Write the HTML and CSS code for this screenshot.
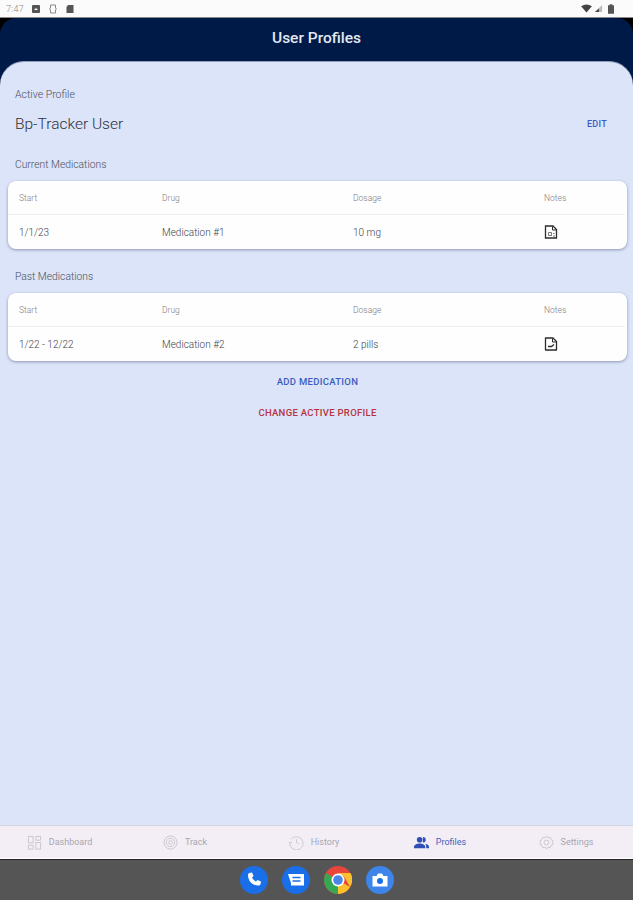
FILE: index.html
```html
<!DOCTYPE html>
<html lang="en">
<head>
  <meta charset="UTF-8" />
  <meta name="viewport" content="width=device-width, initial-scale=1.0" />
  <title>User Profiles</title>
  <link rel="stylesheet" href="styles.css">
</head>
<body>
  <div class="status-bar">
    <div class="status-left">
      <span class="clock">7:47</span>
      <svg class="status-icon" viewBox="0 0 10 10"><rect x="1" y="1" width="8" height="8" rx="1" fill="#555"/><path d="M3 6l2-2 2 2z" fill="#fff"/></svg>
      <svg class="status-icon" viewBox="0 0 10 10"><path d="M2.500 1h5v3l1 1-1 1v3h-5V6l-1-1 1-1z" fill="none" stroke="#888" stroke-width="1"/></svg>
      <svg class="status-icon" viewBox="0 0 10 10"><path d="M1.500 3L3 1h5.500v8h-7z" fill="#555"/></svg>
    </div>
    <div class="status-right">
      <svg class="wifi" viewBox="0 0 12 10"><path d="M0 2.500Q6-1.500 12 2.500L6 9.500z" fill="#444"/></svg>
      <svg class="signal" viewBox="0 0 10 10"><path d="M9 1v8H1z" fill="#bbb"/><path d="M5.500 5v4H1z" fill="#444"/></svg>
      <svg class="battery" viewBox="0 0 7 11"><path d="M2 1V0h3v1h2v10H0V1z" fill="#555"/></svg>
    </div>
  </div>

  <div class="app">
    <header class="top-bar">User Profiles</header>

    <main class="sheet">
      <p class="label first">Active Profile</p>
      <div class="profile-row">
        <span class="profile-name">Bp-Tracker User</span>
        <button class="text-btn blue edit">EDIT</button>
      </div>

      <p class="label">Current Medications</p>
      <div class="med-card">
        <div class="med-row head">
          <span>Start</span><span>Drug</span><span>Dosage</span><span>Notes</span>
        </div>
        <div class="med-row">
          <span>1/1/23</span><span>Medication #1</span><span>10 mg</span>
          <span><svg class="note-icon" viewBox="0 0 14 14"><path d="M1.500 1h7.500l3.500 3.500V13h-11z" fill="none" stroke="#2b2b2b" stroke-width="1.300"/><path d="M8.500 1.500v3.500h3.500" fill="none" stroke="#2b2b2b"/><path d="M4.500 7.500h3v3h-3zM9 8.500h1.500M9 11h2" stroke="#777" fill="none"/></svg></span>
        </div>
      </div>

      <p class="label second">Past Medications</p>
      <div class="med-card">
        <div class="med-row head">
          <span>Start</span><span>Drug</span><span>Dosage</span><span>Notes</span>
        </div>
        <div class="med-row">
          <span>1/22 - 12/22</span><span>Medication #2</span><span>2 pills</span>
          <span><svg class="note-icon" viewBox="0 0 14 14"><path d="M1.500 1h7.500l3.500 3.500V13h-11z" fill="none" stroke="#2b2b2b" stroke-width="1.300" stroke-linejoin="round"/><path d="M8.500 1.500v3.500h3.500" fill="none" stroke="#2b2b2b"/><path d="M4 9.500h3.500l2.500-2" fill="none" stroke="#2b2b2b" stroke-width="1.300"/></svg></span>
        </div>
      </div>

      <div class="actions">
        <button class="text-btn blue">ADD MEDICATION</button>
        <button class="text-btn red">CHANGE ACTIVE PROFILE</button>
      </div>
    </main>
  </div>

  <nav class="bottom-nav">
    <div class="nav-item">
      <svg viewBox="0 0 16 16" fill="none" stroke="#c9c5ce"><rect x="1.500" y="1.500" width="5" height="7"/><rect x="9.500" y="1.500" width="5" height="4"/><rect x="1.500" y="11" width="5" height="4"/><rect x="9.500" y="8" width="5" height="7"/></svg>
      <span>Dashboard</span>
    </div>
    <div class="nav-item">
      <svg viewBox="0 0 16 16" fill="none" stroke="#c9c5ce"><circle cx="8" cy="8" r="7"/><circle cx="8" cy="8" r="4.500"/><circle cx="8" cy="8" r="2"/></svg>
      <span>Track</span>
    </div>
    <div class="nav-item">
      <svg viewBox="0 0 16 16" fill="none" stroke="#c9c5ce"><path d="M2.500 4.500A7 7 0 1 1 1 8"/><path d="M0 8h3M8 4.500V8l2.500 1.500"/></svg>
      <span>History</span>
    </div>
    <div class="nav-item active">
      <svg viewBox="0 0 16 16" fill="#2f4fb5"><circle cx="6" cy="5" r="3"/><path d="M0 14v-1.500C0 10.500 3 9 6 9s6 1.500 6 3.500V14z"/><path d="M9.500 2a3 3 0 0 1 0 6zM12 9.200c2 .4 4 1.500 4 3.300V14h-3v-2c0-1-.4-2-1-2.800z"/></svg>
      <span>Profiles</span>
    </div>
    <div class="nav-item">
      <svg viewBox="0 0 16 16" fill="none" stroke="#c9c5ce"><path d="M8 1l1.500 2 2.500-.5 1 2.500 2 1-.5 2 .5 2-2 1-1 2.500-2.500-.5L8 15l-1.500-2-2.500.5-1-2.500-2-1 .5-2-.5-2 2-1 1-2.500 2.500.5z"/><circle cx="8" cy="8" r="2.500"/></svg>
      <span>Settings</span>
    </div>
  </nav>

  <div class="dock">
    <svg class="dock-icon" viewBox="0 0 28 28"><circle cx="14" cy="14" r="14" fill="#1a6fe8"/><path d="M9.500 7l2.500-.5 1.500 3.500-1.500 1.500c.8 1.800 2.200 3.200 4 4l1.500-1.500 3.500 1.500-.5 2.500c-.3 1-1.200 1.500-2 1.500C12.500 19.500 8 15 8 9c0-.8.500-1.700 1.500-2z" fill="#fff"/></svg>
    <svg class="dock-icon" viewBox="0 0 28 28"><circle cx="14" cy="14" r="14" fill="#1a6fe8"/><path d="M6 8h16v11.500H9V17L6 8z" fill="#fff"/><path d="M10.500 11.500h8M10.500 15h8" stroke="#1a6fe8" stroke-width="1.600"/></svg>
    <svg class="dock-icon" viewBox="0 0 28 28"><circle cx="14" cy="14" r="14" fill="#e8453c"/><path d="M14 14L26.100 21A14 14 0 0 1 14 28z" fill="#fbc02d"/><path d="M14 14v14A14 14 0 0 1 1.900 7z" fill="#34a853"/><path d="M14 7h12.500a14 14 0 0 1-.4 14L20 10.500z" fill="#fbc02d"/><circle cx="14" cy="14" r="6.500" fill="#fff"/><circle cx="14" cy="14" r="4.800" fill="#4a86e8"/></svg>
    <svg class="dock-icon" viewBox="0 0 28 28"><circle cx="14" cy="14" r="14" fill="#3d85ea"/><path d="M6.500 10h4l1.500-2.500h4l1.500 2.500h4v10.500h-15z" fill="#fff"/><circle cx="14" cy="15" r="3" fill="#1a6fe8"/></svg>
  </div>
</body>
</html>
```

FILE: styles.css
```css
html, body {
  margin: 0;
  padding: 0;
}

body {
  width: 633px;
  height: 900px;
  overflow: hidden;
  display: flex;
  flex-direction: column;
  font-family: Roboto, "Liberation Sans", sans-serif;
  background: #000;
}

p {
  margin: 0;
}

button {
  border: none;
  background: none;
  padding: 0;
  font-family: inherit;
  cursor: pointer;
}

.status-bar {
  height: 17px;
  background: #fbfbfb;
  border-bottom: 1px solid #8a8a8a;
  display: flex;
  justify-content: space-between;
  align-items: center;
  padding: 0 19px 0 6px;
}

.status-left,
.status-right {
  display: flex;
  align-items: center;
}

.status-left {
  gap: 7px;
}

.status-right {
  gap: 2px;
}

.clock {
  font-size: 9.500px;
  font-weight: 300;
  color: #888;
}

.status-icon {
  width: 10px;
  height: 10px;
}

.wifi {
  width: 11px;
  height: 9px;
}

.signal {
  width: 9px;
  height: 9px;
}

.battery {
  width: 6px;
  height: 10px;
  margin-left: 3px;
}

.app {
  flex: 1;
  display: flex;
  flex-direction: column;
  background: #001a47;
  border-radius: 16px 16px 0 0;
  min-height: 0;
}

.top-bar {
  height: 43px;
  line-height: 41px;
  text-align: center;
  font-size: 15.500px;
  font-weight: 500;
  color: #e4e8f2;
}

.sheet {
  flex: 1;
  background: #dbe4f8;
  border-radius: 24px 24px 0 0;
  border-top: 1px solid #8f9ab8;
  padding: 0 6px 0 8px;
}

.label {
  font-size: 10.300px;
  font-weight: 300;
  line-height: 12px;
  color: #4a4e5e;
  padding-left: 7px;
  margin-top: 21px;
  margin-bottom: 10px;
}

.label.first {
  margin-top: 27px;
  margin-bottom: 0;
  font-size: 10.500px;
}

.label.second {
  margin-top: 22px;
}

.profile-row {
  display: flex;
  justify-content: space-between;
  align-items: center;
  height: 28px;
  margin-top: 9px;
  padding: 0 20px 0 7px;
}

.profile-name {
  font-size: 15.500px;
  font-weight: 300;
  color: #2f323c;
}

.text-btn {
  font-size: 9.500px;
  font-weight: 500;
  letter-spacing: 0.3px;
}

.edit {
  font-size: 9px;
}

.blue {
  color: #3a5cc0;
}

.red {
  color: #b8333f;
}

.med-card {
  background: #fefefe;
  border-radius: 8px;
  box-shadow: 0 1px 3px rgba(60, 70, 110, 0.5);
}

.med-row {
  display: grid;
  grid-template-columns: 143px 191px 191px 1fr;
  align-items: center;
  height: 34px;
  padding-left: 11px;
  font-size: 10px;
  font-weight: 300;
  color: #3f4149;
}

.med-row.head {
  height: 33px;
  font-size: 8.500px;
  color: #7b7d85;
  border-bottom: 1px solid #ecedf2;
  margin-right: 2px;
}

.note-icon {
  display: block;
  width: 14px;
  height: 14px;
}

.actions {
  display: flex;
  flex-direction: column;
  align-items: center;
  gap: 20px;
  margin-top: 15px;
}

.actions .text-btn {
  line-height: 11px;
}

.bottom-nav {
  height: 32px;
  background: #f3eef6;
  border-top: 1px solid #d5d3dc;
  border-bottom: 1px solid #fff;
  display: grid;
  grid-template-columns: 119px 132px 126px 126px 126px;
}

.nav-item {
  display: flex;
  align-items: center;
  justify-content: center;
  gap: 7px;
  font-size: 9px;
  color: #a8a6ad;
}

.nav-item svg {
  width: 15px;
  height: 15px;
}

.nav-item.active {
  color: #4560ba;
}

.dock {
  height: 41px;
  background: #555555;
  border-top: 1px solid #222;
  display: flex;
  justify-content: center;
  align-items: center;
  gap: 14px;
  box-sizing: border-box;
}

.dock-icon {
  width: 28px;
  height: 28px;
}
```
